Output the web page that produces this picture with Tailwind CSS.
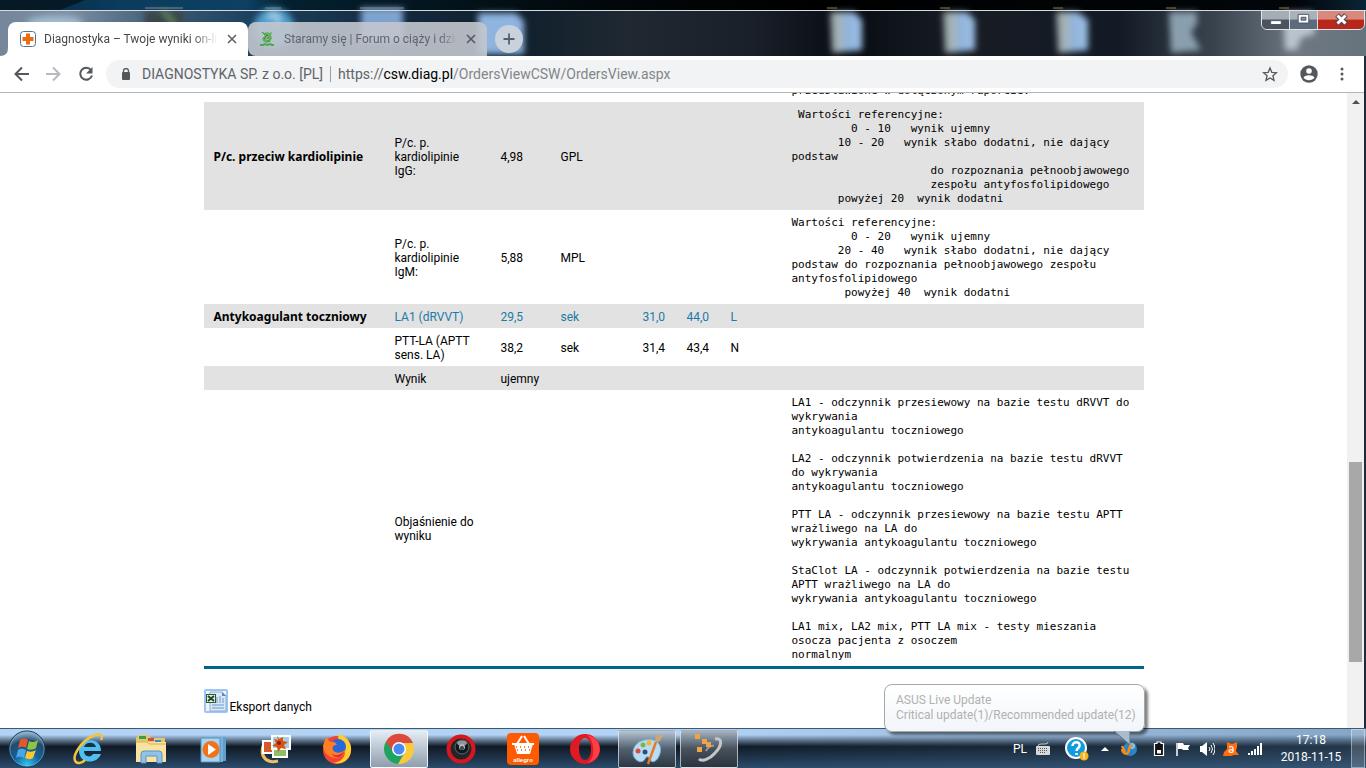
<!DOCTYPE html>
<html lang="pl">
<head>
    <meta charset="UTF-8">
    <meta name="viewport" content="width=device-width, initial-scale=1.0">
    <title>Diagnostyka – Twoje wyniki on-line</title>
    <script src="https://cdn.jsdelivr.net/npm/@tailwindcss/browser@4"></script>
</head>
<body class="h-screen flex flex-col overflow-hidden bg-[#1c2c3c] font-[Roboto,sans-serif] text-xs text-black">

    <!-- Window title bar with tabs -->
    <header class="relative h-14 shrink-0 overflow-hidden bg-[#10161f]">
        <!-- Glass and the desktop behind it -->
        <svg class="absolute inset-0 w-full h-full" viewBox="0 0 1366 56" preserveAspectRatio="none" aria-hidden="true">
            <defs>
                <linearGradient id="desk"><stop offset="0" stop-color="#06253b"/><stop offset=".09" stop-color="#0b3c5e"/><stop offset=".18" stop-color="#0d4063"/><stop offset=".21" stop-color="#04202f"/><stop offset=".45" stop-color="#020709"/><stop offset=".6" stop-color="#000"/><stop offset=".95" stop-color="#02060a"/><stop offset="1" stop-color="#0a2536"/></linearGradient>
                <linearGradient id="glass"><stop offset="0" stop-color="#75869a"/><stop offset=".05" stop-color="#7b8fa3"/><stop offset=".12" stop-color="#3c5a73"/><stop offset=".18" stop-color="#1d4260"/><stop offset=".3" stop-color="#12283a"/><stop offset=".38" stop-color="#10202d"/><stop offset=".46" stop-color="#202831"/><stop offset=".55" stop-color="#1a2029"/><stop offset=".62" stop-color="#080c13"/><stop offset=".7" stop-color="#181c24"/><stop offset=".82" stop-color="#131a25"/><stop offset=".89" stop-color="#3a444f"/><stop offset=".95" stop-color="#6e7781"/><stop offset="1" stop-color="#66747e"/></linearGradient>
                <linearGradient id="folder"><stop offset="0" stop-color="#8f9d9e"/><stop offset=".35" stop-color="#a9b8bd"/><stop offset=".5" stop-color="#8fb2da"/><stop offset="1" stop-color="#9cc0e6"/></linearGradient>
                <filter id="soft" x="-30%" y="-30%" width="160%" height="160%"><feGaussianBlur stdDeviation="3"/></filter>
            </defs>
            <rect width="1366" height="10" fill="url(#desk)"/>
            <path d="M60 10L85 0H0V10z" fill="#051926"/>
            <rect y="10" width="1366" height="46" fill="url(#glass)"/>
            <g filter="url(#soft)">
                <ellipse cx="55" cy="22" rx="28" ry="6" fill="#a3bccf"/>
                <rect x="145" y="11" width="38" height="16" fill="#3b4547"/>
                <path d="M163 11L175 24" stroke="#6f9b66" stroke-width="3"/>
                <circle cx="274" cy="28" r="20" fill="#4d9dca"/>
                <path d="M268 18c4-6 14-2 9 5" stroke="#b9def0" stroke-width="4" fill="none"/>
                <rect x="361" y="8" width="42" height="34" fill="#7fa3d0"/>
                <path d="M478 13h18l9 8 18 10v23h-40z" fill="#8fb4e0"/>
                <path d="M478 13h38l8 8v33h-46z" fill="#8fb4e0"/>
                <path d="M830 12h24l8 8v30l-30 3z" fill="url(#folder)"/>
                <path d="M943 12h24l8 8v30l-30 3z" fill="url(#folder)"/>
                <path d="M1056 12h22l10 8v30l-30 3z" fill="url(#folder)"/>
                <path d="M1169 12h28v12l-6 8 10 18-30 3z" fill="#8a9fae"/>
                <path d="M1283 12h30l2 22-14 4-4 12h-12z" fill="#b9c3cd"/>
            </g>
            <path d="M827 8h10M940 8h10M1053 8h10M1166 8h10M1279 8h10" stroke="#8d7a45" stroke-width="1"/>
            <path d="M145 8h38M265 8h16M360 8h44" stroke="#7a8a97" stroke-width="1"/>
            <path d="M0 10.500H1366" stroke="#d5dadf"/>
        </svg>

        <div class="relative flex items-end h-full pl-2">
            <div class="relative flex items-center w-60 h-[34px] pl-3 pr-2.5 bg-white rounded-t-lg">
                <svg class="absolute -left-2 bottom-0 w-2 h-2" viewBox="0 0 8 8" aria-hidden="true"><path d="M8 0v8H0q8 0 8-8z" fill="#fff"/></svg>
                <svg class="w-4 h-4 shrink-0" viewBox="0 0 16 16" aria-hidden="true">
                    <rect x=".5" y=".5" width="15" height="15" rx="3" fill="#fff" stroke="#4d7794"/>
                    <path d="M6 2.500h4V6h3.500v4H10v3.500H6V10H2.500V6H6z" fill="#ee6c10"/>
                </svg>
                <span class="ml-2 flex-1 overflow-hidden whitespace-nowrap text-[#45494d] mask-r-from-85%">Diagnostyka – Twoje wyniki on-line</span>
                <button class="ml-2 w-3 h-3" aria-label="Zamknij kartę"><svg viewBox="0 0 12 12"><path d="M2 2l8 8M10 2l-8 8" stroke="#5f6368" stroke-width="1.600"/></svg></button>
            </div>
            <div class="flex items-center w-[239px] h-[34px] pl-3 pr-2.5 bg-[#c3c7ce]/90 rounded-t-lg rounded-bl-lg">
                <svg class="w-4 h-4 shrink-0" viewBox="0 0 16 16" aria-hidden="true">
                    <path d="M3 1l2 1 2-1 2 1 3-1-1 3 1 3-2 4-4 1-3-2-1-3 3-2z" fill="#5cb35c"/>
                    <path d="M2 1l3 3M4 8l3-4 3 3-2 4" stroke="#38873f" fill="none"/>
                    <circle cx="8" cy="7" r="1.500" fill="#e8f4e4"/><circle cx="8" cy="7" r="1" fill="#b52c7c"/>
                    <path d="M0 14h3l2-1 2 1 3-1 2 1h2" stroke="#4fa653" stroke-width="2" fill="none"/>
                </svg>
                <span class="ml-2 flex-1 overflow-hidden whitespace-nowrap text-[#5d6570] mask-r-from-90%">Staramy się | Forum o ciąży i dziecku</span>
                <button class="ml-2 w-3 h-3" aria-label="Zamknij kartę"><svg viewBox="0 0 12 12"><path d="M2 2l8 8M10 2l-8 8" stroke="#55595e" stroke-width="1.600"/></svg></button>
            </div>
            <button class="ml-2 mb-[3px] w-7 h-7 rounded-full bg-[#c9d1dc]" aria-label="Nowa karta"><svg viewBox="0 0 28 28"><path d="M14 8.500v11M8.500 14h11" stroke="#55606c" stroke-width="1.800"/></svg></button>
        </div>

        <!-- Minimise, maximise, close -->
        <div class="absolute right-px top-2.5 flex h-5 overflow-hidden rounded-b-md border border-[#dfe4e8] divide-x divide-[#d8dde2]">
            <button class="w-7 bg-linear-to-b from-[#a4adb4] from-45% to-[#4b545c] to-50%" aria-label="Minimalizuj"><svg viewBox="0 0 28 18"><rect x="9" y="10" width="11" height="4" fill="#fff" stroke="#4e5362"/></svg></button>
            <button class="w-7 bg-linear-to-b from-[#a9b1b9] from-45% to-[#5c6c7d] to-50%" aria-label="Maksymalizuj"><svg viewBox="0 0 28 18"><path d="M8.500 3.500h11v9h-11z" fill="#fff" stroke="#4e5362"/><path d="M11.500 6.500h5v3h-5z" fill="#8592a0" stroke="#4e5362"/></svg></button>
            <button class="w-[46px] bg-linear-to-b from-[#d9887c] from-45% to-[#b8271a] to-50%" aria-label="Zamknij"><svg viewBox="0 0 46 18"><path d="M19 4l9 9M28 4l-9 9" stroke="#4e4a5c" stroke-width="5"/><path d="M19.500 4.500l8 8M27.500 4.500l-8 8" stroke="#fff" stroke-width="3"/></svg></button>
        </div>
    </header>

    <!-- Address bar -->
    <nav class="mr-0.5 flex items-center h-[37px] shrink-0 bg-white border-b border-[#b4b5b6] pl-3.5 pr-3.5 text-[#5f6368]">
        <button class="w-4 h-4" aria-label="Wstecz"><svg viewBox="0 0 16 16" fill="none" stroke="#54585d" stroke-width="2"><path d="M15 8H2.500M8 1.500L1.500 8 8 14.500"/></svg></button>
        <button class="ml-4 w-4 h-4" aria-label="Dalej"><svg viewBox="0 0 16 16" fill="none" stroke="#b6b9bd" stroke-width="2"><path d="M0 8h13.500M7 1.500L13.500 8 7 14.500"/></svg></button>
        <button class="ml-4 w-4 h-4" aria-label="Odśwież"><svg viewBox="0 0 16 16"><path d="M13 4A6 6 0 1 0 14 9.500" fill="none" stroke="#54585d" stroke-width="2"/><path d="M14.500 1v6.500H8z" fill="#54585d"/></svg></button>
        <div class="ml-3 flex-1 flex items-center h-7 rounded-full bg-[#f1f3f4] pl-3.5 pr-2.5">
            <svg class="w-3 h-3 shrink-0" viewBox="0 0 12 12" aria-hidden="true"><rect x="2" y="4" width="8" height="8" rx="1" fill="#54585d"/><path d="M3.500 5V3a2.500 2.500 0 0 1 5 0v2" fill="none" stroke="#54585d" stroke-width="1.300"/></svg>
            <span class="ml-2.5 text-sm whitespace-nowrap">DIAGNOSTYKA SP. z o.o. [PL]</span>
            <span class="mx-[7px] w-px h-4 bg-[#9a9da1]"></span>
            <span class="flex-1 text-sm whitespace-nowrap text-[#80868b]"><span class="text-[#5f6368]">https://</span><span class="text-black">csw.diag.pl</span>/OrdersViewCSW/OrdersView.aspx</span>
            <button class="w-4 h-4" aria-label="Dodaj do zakładek"><svg viewBox="0 0 16 16"><path d="M8 2l1.800 4.300 4.700.4-3.600 3 1.100 4.600-4-2.400-4 2.400 1.100-4.600-3.600-3 4.700-.4z" fill="none" stroke="#54585d" stroke-width="1.300"/></svg></button>
        </div>
        <button class="ml-3 w-[18px] h-[18px]" aria-label="Profil"><svg viewBox="0 0 18 18"><circle cx="9" cy="9" r="8.700" fill="#54585d"/><circle cx="9" cy="6" r="2.800" fill="#fff"/><path d="M3.500 12.500c2-3 9-3 11 0-2.500 3.500-8.500 3.500-11 0z" fill="#fff"/></svg></button>
        <button class="ml-4 w-4 h-4" aria-label="Menu"><svg viewBox="0 0 16 16" fill="#54585d"><circle cx="8" cy="3" r="1.500"/><circle cx="8" cy="8" r="1.500"/><circle cx="8" cy="13" r="1.500"/></svg></button>
    </nav>

    <!-- Page content -->
    <div class="flex flex-1 min-h-0 mr-0.5 bg-white">
        <main class="flex-1 overflow-hidden">
            <table class="-mt-[15px] mx-auto w-[940px] table-fixed border-b-[3px] border-[#006586] text-left leading-[14px] [&_td]:px-2.5 [&_td]:pt-1.5 [&_td]:pb-1 [&_th]:pl-2.5 [&_th]:pt-1.5 [&_th]:pb-1 [&_th]:font-['Noto_Sans',sans-serif] [&_pre]:font-['DejaVu_Sans_Mono',monospace] [&_pre]:text-[11px] [&_pre]:leading-[14px]">
                <colgroup>
                    <col class="w-[181px]"><col class="w-[106px]"><col class="w-[60px]"><col class="w-[82px]"><col class="w-[44px]"><col class="w-[44px]"><col class="w-[61px]"><col>
                </colgroup>
                <tbody>
                    <tr>
                        <th></th><td></td><td></td><td></td><td></td><td></td><td></td>
                        <td><pre>przedstawione w dołączonym raporcie.</pre></td>
                    </tr>
                    <tr class="bg-[#e2e2e2]">
                        <th>P/c. przeciw kardiolipinie</th>
                        <td>P/c. p.<br>kardiolipinie<br>IgG:</td>
                        <td>4,98</td><td>GPL</td><td></td><td></td><td></td>
                        <td><pre> Wartości referencyjne:
         0 - 10   wynik ujemny
       10 - 20   wynik słabo dodatni, nie dający
podstaw
                     do rozpoznania pełnoobjawowego
                     zespołu antyfosfolipidowego
       powyżej 20  wynik dodatni</pre></td>
                    </tr>
                    <tr>
                        <th></th>
                        <td>P/c. p.<br>kardiolipinie<br>IgM:</td>
                        <td>5,88</td><td>MPL</td><td></td><td></td><td></td>
                        <td><pre>Wartości referencyjne:
         0 - 20   wynik ujemny
       20 - 40   wynik słabo dodatni, nie dający
podstaw do rozpoznania pełnoobjawowego zespołu
antyfosfolipidowego
        powyżej 40  wynik dodatni</pre></td>
                    </tr>
                    <tr class="bg-[#e2e2e2] text-[#1a7ba6]">
                        <th class="text-black">Antykoagulant toczniowy</th>
                        <td>LA1 (dRVVT)</td><td>29,5</td><td>sek</td><td>31,0</td><td>44,0</td><td>L</td><td></td>
                    </tr>
                    <tr>
                        <th></th>
                        <td>PTT-LA (APTT<br>sens. LA)</td><td>38,2</td><td>sek</td><td>31,4</td><td>43,4</td><td>N</td><td></td>
                    </tr>
                    <tr class="bg-[#e2e2e2]">
                        <th></th>
                        <td>Wynik</td><td>ujemny</td><td></td><td></td><td></td><td></td><td></td>
                    </tr>
                    <tr>
                        <th></th>
                        <td>Objaśnienie do<br>wyniku</td><td></td><td></td><td></td><td></td><td></td>
                        <td><pre>LA1 - odczynnik przesiewowy na bazie testu dRVVT do
wykrywania
antykoagulantu toczniowego

LA2 - odczynnik potwierdzenia na bazie testu dRVVT
do wykrywania
antykoagulantu toczniowego

PTT LA - odczynnik przesiewowy na bazie testu APTT
wrażliwego na LA do
wykrywania antykoagulantu toczniowego

StaClot LA - odczynnik potwierdzenia na bazie testu
APTT wrażliwego na LA do
wykrywania antykoagulantu toczniowego

LA1 mix, LA2 mix, PTT LA mix - testy mieszania
osocza pacjenta z osoczem
normalnym</pre></td>
                    </tr>
                </tbody>
            </table>

            <div class="mx-auto w-[940px] pt-5">
                <a href="#" class="inline-flex items-end gap-0.5">
                    <svg class="w-6 h-6" viewBox="0 0 24 24" aria-hidden="true">
                        <rect x="1" y="1" width="22" height="22" rx="1" fill="#eef4fb" stroke="#9cc4f4" stroke-width="2"/>
                        <path d="M6 3h12l4 4v15H6z" fill="#dbe8f6" stroke="#8fb0d6"/>
                        <path d="M18 3v4h4z" fill="#5f87b8"/>
                        <path d="M13 8v6M16 7v7M19 9v5M8 16h12M8 19h12" stroke="#8db3dc" stroke-width="1.500"/>
                        <rect x="2.500" y="5.500" width="9" height="8" fill="#e7f1e2" stroke="#2f5c35"/>
                        <path d="M4 7l6 5M10 7l-6 5" stroke="#1f4a25" stroke-width="2"/>
                    </svg>
                    <span class="leading-3">Eksport danych</span>
                </a>
            </div>
        </main>

        <!-- Scrollbar -->
        <div class="flex flex-col items-center w-[17px] shrink-0 bg-[#f1f1f1]">
            <svg class="w-4 h-4 shrink-0" viewBox="0 0 16 16" aria-hidden="true"><path d="M4 11l4-4 4 4z" fill="#505050"/></svg>
            <div class="grow-[352]"></div>
            <div class="w-[13px] grow-[199] bg-[#a8a8a8]"></div>
            <div class="grow-[50]"></div>
            <div class="h-4 shrink-0"></div>
        </div>
    </div>

    <!-- Taskbar -->
    <footer class="relative flex items-center h-10 shrink-0 border-t border-[#3d5873] bg-linear-to-b from-[#b3d3f5] from-15% via-[#101a26] via-45% to-[#2b4c6c] text-white">
        <div class="absolute inset-0 bg-linear-to-r from-transparent from-50% to-[#41627f]/40"></div>
        <button class="relative ml-2 w-[38px] h-[38px]" aria-label="Start">
            <svg viewBox="0 0 38 38">
                <defs>
                    <radialGradient id="orb" cx=".5" cy=".95" r=".9"><stop offset="0" stop-color="#35c9f5"/><stop offset=".4" stop-color="#14649c"/><stop offset=".75" stop-color="#24496c"/><stop offset="1" stop-color="#8fb3cc"/></radialGradient>
                </defs>
                <circle cx="19" cy="19" r="18" fill="url(#orb)" stroke="#17344e"/>
                <circle cx="19" cy="19" r="17" fill="none" stroke="#7fb1d0" opacity=".6"/>
                <path d="M12 10c3-2 5-2 8 0l-2 8c-3-2-5-1-8 0z" fill="#e8572a"/>
                <path d="M21 11c3 2 6 1 9-1l-2 8c-3 2-6 2-9 1z" fill="#8cc63f"/>
                <path d="M10 20c3-2 5-1 8 0l-2 8c-3-2-6-1-8 0z" fill="#4aa6e8"/>
                <path d="M19 21c3 1 6 1 9-1l-3 8c-3 2-5 1-8 0z" fill="#fdc62f"/>
            </svg>
        </button>
        <div class="relative flex gap-1 ml-3.5 [&>button]:flex [&>button]:items-center [&>button]:justify-center [&>button]:w-[58px] [&>button]:h-[38px]">
            <button aria-label="Internet Explorer"><svg class="w-8 h-8" viewBox="0 0 32 32"><path d="M28 18H11c0 6 7 7 9 3h8c-4 11-22 10-22-3 0-14 22-15 22 0z" fill="#4fc0f1"/><path d="M11 14h12c-1-5-10-6-12 0z" fill="#173246"/><path d="M3 29c-5-5 5-21 17-26 6-3 11-2 8 4M3 29c2 2 6 1 9-2" fill="none" stroke="#f5c33b" stroke-width="2.500"/></svg></button>
            <button aria-label="Eksplorator"><svg class="w-8 h-8" viewBox="0 0 32 32"><path d="M1 5l3-3h10l2 3h14v24H1z" fill="#e9c766"/><path d="M4 3h7v3H4z" fill="#3a9c4c"/><path d="M13 5h6v3h-6z" fill="#d0503c"/><path d="M20 7h6v3h-6z" fill="#3f87d0"/><path d="M1 9h30v20H1z" fill="#f8e3a0"/><path d="M1 9h11l2 2h17" fill="none" stroke="#d5af4c"/><path d="M6 30V21q0-3 3-3h15q3 0 3 3v9h-5v-7H11v7z" fill="#8fc3ea" stroke="#5b93c4"/></svg></button>
            <button aria-label="Windows Media Player"><svg class="w-8 h-8" viewBox="0 0 32 32"><path d="M13 4h16v24H13z" fill="#5f9fce"/><path d="M9 4h17v25H9z" fill="#76b2dc"/><path d="M4 5h19v24H4z" fill="#a9d3ef" stroke="#5592c0"/><circle cx="14" cy="16.500" r="8.500" fill="#f0731c"/><path d="M11 11v11l8-5.500z" fill="#fff"/></svg></button>
            <button aria-label="Galeria fotografii"><svg class="w-8 h-8" viewBox="0 0 32 32"><path d="M4 13c-3 10 3 18 15 15" fill="none" stroke="#f2bc60" stroke-width="3"/><path d="M4 8h13v12H4z" fill="#d65a2a" stroke="#fff" stroke-width="2"/><path d="M14 13h14v11H14z" fill="#8fbf62" stroke="#fff" stroke-width="2"/><path d="M13 3h18v13H13z" fill="#a4cfe9" stroke="#fff" stroke-width="2"/><path d="M18 2l2 4 4-2v4l5 1-4 3 2 4-5-1-3 4-1-5-5-1 4-3-2-4 4 1z" fill="#e05014"/><circle cx="20" cy="10" r="2" fill="#7b2c0e"/></svg></button>
            <button aria-label="Firefox"><svg class="w-8 h-8" viewBox="0 0 32 32"><circle cx="16" cy="17" r="14" fill="#f5432f"/><path d="M18 1c9 3 13 10 12 17-1 9-9 14-18 12 12-2 14-10 10-17-4-3-6-8-4-12z" fill="#ffce2e"/><circle cx="17" cy="14" r="8" fill="#2867d8"/><path d="M2 13L5 4l4 5c3-1 6 0 7 3-4 0-5 2-4 5 3 4 8 3 12 0 0 7-8 10-14 7-5-2-7-6-8-11z" fill="#ff7f24"/><path d="M10 20c4 4 10 2 13-2-1 7-9 9-13 2z" fill="#e12a43"/></svg></button>
            <button class="rounded-xs border border-white/80 bg-linear-to-b from-[#e4edf5] to-[#8e9eae]" aria-label="Chrome"><svg class="w-8 h-8" viewBox="0 0 32 32"><circle cx="16" cy="16" r="15" fill="#fbc93c"/><path d="M16 16L3 8.500A15 15 0 0 0 15 31l7-12z" fill="#1da362"/><path d="M3 8.500A15 15 0 0 1 30 10H16L10 19z" fill="#db4a3d"/><circle cx="16" cy="16" r="7" fill="#fff"/><circle cx="16" cy="16" r="5.500" fill="#4a8af4"/></svg></button>
            <button aria-label="Kamera"><svg class="w-8 h-8" viewBox="0 0 32 32"><circle cx="16" cy="16" r="12.500" fill="#20262b" stroke="#d9161c" stroke-width="4"/><circle cx="17" cy="14" r="7" fill="#11171b" stroke="#60686d"/><ellipse cx="17" cy="10" rx="5" ry="2.500" fill="#8f979b"/><circle cx="17" cy="14" r="3" fill="#b4babd"/><circle cx="17" cy="15" r="2" fill="#3a4247"/></svg></button>
            <button aria-label="Allegro"><svg class="w-8 h-8" viewBox="0 0 32 32"><rect width="32" height="32" rx="4" fill="#ff5a00"/><path d="M10 11l5-8M22 11l-5-8M5 11h22" stroke="#fff" stroke-width="2" fill="none"/><path d="M7 11h19l-3 10H10z" fill="#fff"/><path d="M9 14h15M10 17h13" stroke="#ff5a00" stroke-dasharray="1 3" stroke-width="1.500"/><text x="16" y="29" font-size="6" font-weight="bold" font-family="Liberation Sans, sans-serif" fill="#fff" text-anchor="middle">allegro</text></svg></button>
            <button aria-label="Opera"><svg class="w-8 h-8" viewBox="0 0 32 32"><path fill-rule="evenodd" d="M16 1a15 15 0 1 0 0 30 15 15 0 0 0 0-30zm0 4c4 0 6 5 6 11s-2 11-6 11-6-5-6-11 2-11 6-11z" fill="#df1a25"/><path d="M18 2c17 3 17 25 0 28 9-4 8-22 0-28z" fill="#ff3e45"/></svg></button>
            <button class="rounded-xs border border-white/60 bg-linear-to-b from-[#b6c6d6] via-[#52606e] via-50% to-[#2c3743]" aria-label="Paint"><svg class="w-8 h-8" viewBox="0 0 32 32"><path d="M2 20C2 10 12 5 22 7c8 2 9 10 6 16-3 7-8 7-9 3-1-3-4-3-5 0-3 6-12 1-12-6z" fill="#b9dcf2" stroke="#7bb1d8"/><circle cx="12" cy="12" r="2.500" fill="#76b947"/><circle cx="18" cy="10" r="2.500" fill="#f2b632"/><circle cx="7" cy="18" r="2.500" fill="#df4a39"/><circle cx="14" cy="19" r="2.500" fill="#27507d"/><path d="M17 31l8-22" stroke="#e57a25" stroke-width="2.500"/><path d="M24 8l1-6 7 1-4 6z" fill="#cfa57a"/></svg></button>
            <button class="rounded-xs border border-white/60 bg-linear-to-b from-[#a4b3c2] via-[#47515c] via-50% to-[#2b343d]" aria-label="Aktualizacje"><svg class="w-8 h-8" viewBox="0 0 32 32"><path d="M22 6c8-2 7 7 0 14-5 6-13 9-16 6" fill="none" stroke="#c6c7c9" stroke-width="3"/><path d="M21 13c-3-1-7 2-8 5" fill="none" stroke="#9b9da0" stroke-width="2"/><path d="M2 1h5v5H2zM9 6h5v5H9zM4 14h5v5H4zM13 9h5v5h-5z" fill="#f2a440"/></svg></button>
        </div>

        <!-- Tray -->
        <div class="relative ml-auto flex items-center gap-2 h-full">
            <span>PL</span>
            <svg class="w-4 h-4" viewBox="0 0 16 16" aria-hidden="true"><path d="M3 5q0-2 3-2h4q3 0 3-2" fill="none" stroke="#c6ccd2"/><rect x="1" y="5" width="14" height="9" rx="1" fill="#d6dadd"/><path d="M3 7.500h10M3 9.500h10M5 11.500h6" stroke="#555" stroke-dasharray="1 1"/></svg>
            <svg class="ml-1.5 w-6 h-6" viewBox="0 0 24 24" aria-hidden="true"><circle cx="11" cy="11" r="10" fill="#129bdc" stroke="#fff" stroke-width="2"/><path d="M7.500 9c0-5 8-5 7 0 0 2-3 2-3 5M11.500 16v2" fill="none" stroke="#fff" stroke-width="2.500"/><circle cx="19" cy="19" r="4.500" fill="#f8b41b"/><path d="M19 16v6" stroke="#fff"/></svg>
            <svg class="w-4 h-4" viewBox="0 0 16 16" aria-hidden="true"><path d="M4 10l4-4 4 4z" fill="#fff"/></svg>
            <svg class="w-4 h-4" viewBox="0 0 16 16" aria-hidden="true"><circle cx="9" cy="8" r="7" fill="#2d83c6"/><circle cx="11" cy="5" r="3" fill="#83c6ec"/><path d="M1 8c1 5 6 7 7 1 0-3 2-5 4-4M1 5l3 6" fill="none" stroke="#f28a1c" stroke-width="2.500"/></svg>
            <svg class="ml-1.5 w-4 h-4" viewBox="0 0 16 16" aria-hidden="true"><path d="M6 1h4v1.500h2.500v12h-9v-12H6z" fill="#111" stroke="#fff" stroke-width="1.200"/><path d="M6 9h4v3.500H6z" fill="#fff"/></svg>
            <svg class="w-4 h-4" viewBox="0 0 16 16" aria-hidden="true"><path d="M2 2v13" stroke="#fff" stroke-width="1.500"/><path d="M3 2h5l1 2h6l-2 3 1 2H8L7 8H3z" fill="#fff"/></svg>
            <svg class="w-4 h-4" viewBox="0 0 16 16" aria-hidden="true"><path d="M1 5h2l5-4v14l-5-4H1z" fill="#fff"/><path d="M10 6q2 2 0 4M12 4q3 4 0 8M14 2q4 6 0 12" fill="none" stroke="#fff"/></svg>
            <svg class="w-4 h-4" viewBox="0 0 16 16" aria-hidden="true"><path d="M4 1l5 2 5-2 0 5-1 4 3 4-5 0-3 1-4 0-4 0 1-4 3-3z" fill="#ff6d0c"/><path d="M6 6q4-1 4 1v4q-4 1-4-1t4-1" fill="none" stroke="#fff" stroke-width="1.200"/></svg>
            <svg class="w-4 h-4" viewBox="0 0 16 16" aria-hidden="true"><path d="M1 12h2v2H1zM4 10h2v4H4zM7 8h2v6H7zM10 5h2v9h-2zM13 2h2v12h-2z" fill="#fff"/></svg>
            <div class="w-20 text-center leading-[17px]">17:18<br>2018-11-15</div>
            <button class="-ml-2 mr-px w-3.5 h-full border border-white/40 bg-white/15" aria-label="Pokaż pulpit"></button>
        </div>

        <!-- Notification balloon -->
        <div role="status" class="absolute right-[221px] bottom-9 w-[261px] h-12 rounded-lg border border-[#a5a8ab] bg-linear-to-b from-white to-[#f2f6fa] px-[11px] pt-2 leading-[15px] text-[#b1b1b1] whitespace-nowrap shadow-[3px_3px_3px_rgba(0,0,0,0.5)]">
            ASUS Live Update<br>Critical update(1)/Recommended update(12)
            <svg class="absolute right-3.5 top-full w-4 h-3.5" viewBox="0 0 16 14" aria-hidden="true"><path d="M0 0l16 14V0z" fill="#a9bccd"/><path d="M0 0l16 14V0" fill="none" stroke="#5c6e7e"/></svg>
        </div>
    </footer>

</body>
</html>
